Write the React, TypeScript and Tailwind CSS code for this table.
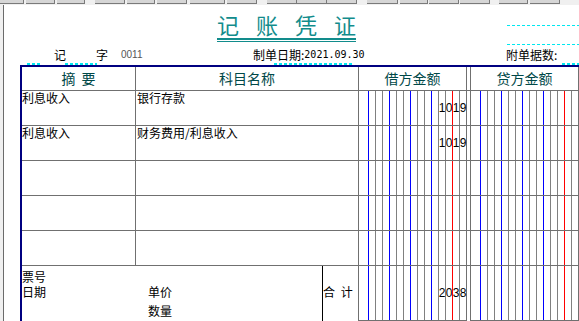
import clsx from "clsx"

const cjk = "font-['Noto_Sans_CJK_SC',sans-serif]"
const tight = "font-['Liberation_Sans','Noto_Sans_CJK_SC',sans-serif]"
const dash = "bg-[image:repeating-linear-gradient(90deg,#00e8f0_0_3px,transparent_3px_5px)]"

// colours of the digit separators: blue every three places, red before the cents
const LINES = [
  "border-[#0000ff]", "border-[#808080]", "border-[#808080]",
  "border-[#0000ff]", "border-[#808080]", "border-[#808080]",
  "border-[#0000ff]", "border-[#808080]", "border-[#808080]",
  "border-[#0000ff]", "border-[#808080]", "border-[#808080]",
  "border-[#ff0000]", "border-[#808080]",
]

const toolbar = [
  [0, 24], [26, 29], [57, 28], [95, 30], [127, 28], [157, 30], [190, 35], [227, 30],
  [267, 30], [297, 30], [327, 30], [367, 31], [400, 28], [429, 30], [460, 30], [499, 29], [530, 30],
]

function Amount({ value = "", credit = false, bottom = false }: { value?: string; credit?: boolean; bottom?: boolean }) {
  const digits = value.padStart(14, " ").split("")
  return (
    <div
      className={clsx(
        "flex shrink-0 border-r border-[#707070]",
        credit ? "w-[109px] border-l" : "w-[108px]",
        bottom && "border-b"
      )}
    >
      <div className="w-[9px] shrink-0" />
      {LINES.map((c, i) => (
        <div
          key={i}
          className={`flex w-[7px] shrink-0 items-center justify-center border-l ${c} font-['Liberation_Sans',sans-serif] text-[12px] text-black`}
        >
          {digits[i].trim()}
        </div>
      ))}
    </div>
  )
}

function Row({ summary = "", account = "", amount = "" }: { summary?: string; account?: string; amount?: string }) {
  return (
    <div className="flex h-[35px] border-b border-[#707070] text-[12px] leading-[14px] text-black">
      <div className="w-[114px] shrink-0 border-r border-[#707070]">{summary}</div>
      <div className="w-[223px] shrink-0 border-r border-[#707070] pl-[1px]">{account}</div>
      <Amount value={amount} />
      <div className="w-[3px] shrink-0" />
      <Amount credit />
    </div>
  )
}

export default function App() {
  return (
    <div className={`flex h-[321px] w-[579px] flex-col overflow-hidden bg-white ${cjk}`}>
      {/* toolbar edge */}
      <div className="flex h-[5px] shrink-0 bg-[#f0f0f0]">
        {toolbar.map(([x, w], i) => (
          <div
            key={i}
            style={{ marginLeft: i === 0 ? x : x - (toolbar[i - 1][0] + toolbar[i - 1][1]), width: w }}
            className="h-[4px] shrink-0 border-r border-b border-[#7a7a7a] bg-[#d6d6d6]"
          />
        ))}
      </div>

      <div className="flex flex-1">
        <div className="w-[3px] shrink-0 bg-[#f0f0f0]" />
        <div className="w-[1px] shrink-0 bg-[#6b6b6b]" />

        <div className="flex flex-1 flex-col">
          {/* title */}
          <div className="flex h-[42px] shrink-0">
            <div className="w-[213px] shrink-0" />
            <div className="flex w-[139px] shrink-0 flex-col pt-[7px]">
              <div className="flex h-[24px] justify-between text-[22px] leading-[24px] text-[#128c8c]">
                <span>记</span>
                <span>账</span>
                <span>凭</span>
                <span>证</span>
              </div>
              <div className="mt-[2px] h-[2px] bg-[#128c8c]" />
              <div className="mt-[1px] h-[1px] bg-[#128c8c]" />
            </div>
            <div className="flex-1" />
            <div className="flex w-[72px] shrink-0 flex-col">
              <div className={`mt-[20px] h-[1px] ${dash}`} />
              <div className={`mt-[18px] h-[1px] ${dash}`} />
            </div>
          </div>

          {/* voucher info */}
          <div className="flex h-[16px] shrink-0 items-center whitespace-nowrap text-[12px] leading-[14px] text-black">
            <div className="w-[50px] shrink-0" />
            <div className="w-[42px] shrink-0">记</div>
            <div className="w-[25px] shrink-0">字</div>
            <div className="w-[132px] shrink-0 font-['Liberation_Sans',sans-serif] text-[10px] text-[#555555]">0011</div>
            <div className="flex w-[253px] shrink-0 items-center">
              <span>制单日期:</span>
              <span className="font-['DejaVu_Sans_Mono',monospace] text-[10px]">2021.09.30</span>
            </div>
            <div>附单据数:</div>
          </div>
          <div className="flex h-[2px] shrink-0">
            <div className={`ml-[23px] w-[15px] ${dash}`} />
            <div className={`ml-[23px] w-[32px] ${dash}`} />
            <div className={`ml-[177px] w-[79px] ${dash}`} />
            <div className={`ml-[209px] flex-1 ${dash}`} />
          </div>

          {/* table */}
          <div className="ml-[16px] flex w-[559px] flex-col border-t-2 border-l-2 border-[#000080]">
            <div className="flex h-[24px] border-b border-[#707070] text-[14px] text-[#004848]">
              <div className="flex w-[114px] shrink-0 items-center justify-center border-r border-[#707070] [word-spacing:3px]">
                摘 要
              </div>
              <div className="flex w-[223px] shrink-0 items-center justify-center border-r border-[#707070]">
                科目名称
              </div>
              <div className="flex w-[108px] shrink-0 items-center justify-center border-r border-[#707070]">
                借方金额
              </div>
              <div className="w-[3px] shrink-0" />
              <div className="flex w-[109px] shrink-0 items-center justify-center border-x border-[#707070]">
                贷方金额
              </div>
            </div>

            <Row summary="利息收入" account="银行存款" amount="1019" />
            <Row summary="利息收入" account="财务费用/利息收入" amount="1019" />
            <Row />
            <Row />
            <Row />

            <div className="flex h-[55px] text-[12px] leading-[15px] text-black">
              <div className={`flex w-[300px] shrink-0 flex-col pt-[5px] ${tight}`}>
                <div>票号</div>
                <div className="flex">
                  <div className="w-[126px] shrink-0">日期</div>
                  <div>单价</div>
                </div>
                <div className="mt-[4px] pl-[126px]">数量</div>
              </div>
              <div className="w-[37px] shrink-0 border-r border-l border-r-[#707070] border-l-black pt-[18px] [word-spacing:3px]">
                合 计
              </div>
              <Amount value="2038" bottom />
              <div className="w-[3px] shrink-0" />
              <Amount credit bottom />
            </div>
          </div>
        </div>
      </div>
    </div>
  )
}
